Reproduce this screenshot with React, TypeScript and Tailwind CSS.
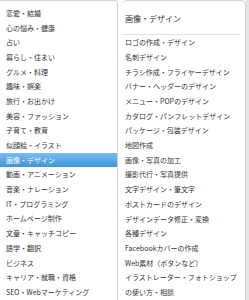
const categories = [
  "恋愛・結婚",
  "心の悩み・健康",
  "占い",
  "暮らし・住まい",
  "グルメ・料理",
  "趣味・娯楽",
  "旅行・お出かけ",
  "美容・ファッション",
  "子育て・教育",
  "似顔絵・イラスト",
  "画像・デザイン",
  "動画・アニメーション",
  "音楽・ナレーション",
  "IT・プログラミング",
  "ホームページ制作",
  "文章・キャッチコピー",
  "語学・翻訳",
  "ビジネス",
  "キャリア・就職・資格",
  "SEO・Webマーケティング",
];

const subItems = [
  "ロゴの作成・デザイン",
  "名刺デザイン",
  "チラシ作成・フライヤーデザイン",
  "バナー・ヘッダーのデザイン",
  "メニュー・POPのデザイン",
  "カタログ・パンフレットデザイン",
  "パッケージ・包装デザイン",
  "地図作成",
  "画像・写真の加工",
  "撮影代行・写真提供",
  "文字デザイン・筆文字",
  "ポストカードのデザイン",
  "デザインデータ修正・変換",
  "各種デザイン",
  "Facebookカバーの作成",
  "Web素材（ボタンなど）",
  "イラストレーター・フォトショップ",
  "の使い方・相談",
];

const selected = "画像・デザイン";

export default function App() {
  return (
    <div
      className="flex h-[300px] w-[249px] overflow-hidden bg-white text-[7px] text-[#333]"
      style={{ fontFamily: '"Noto Sans CJK JP", "Noto Sans", sans-serif' }}
    >
      {/* category list */}
      <ul className="w-[118px] shrink-0 rounded-tr-[4px] border-t border-r border-[#d4d4d4] pt-[5px]">
        {categories.map((c) => (
          <li
            key={c}
            className={`flex h-[14.68px] items-center pl-[6px] ${
              c === selected ? "bg-gradient-to-b from-[#79bdf0] to-[#3f94d8] text-white" : ""
            }`}
          >
            {c}
          </li>
        ))}
      </ul>

      {/* sub-category panel */}
      <div className="ml-[4px] flex-1 rounded-t-[5px] border-t border-r border-[#d4d4d4] pt-[5px]">
        <div className="mr-[5px] flex h-[29.36px] items-center border-b border-[#e2e2e2] pl-[3px] pb-[2px] text-[8px]">
          画像・デザイン
        </div>
        <ul>
          {subItems.map((s) => (
            <li key={s} className="flex h-[14.68px] items-center pl-[3px]">
              {s}
            </li>
          ))}
        </ul>
      </div>
      <div className="w-[3px] shrink-0 bg-[#e6e6e6]" />
    </div>
  );
}
